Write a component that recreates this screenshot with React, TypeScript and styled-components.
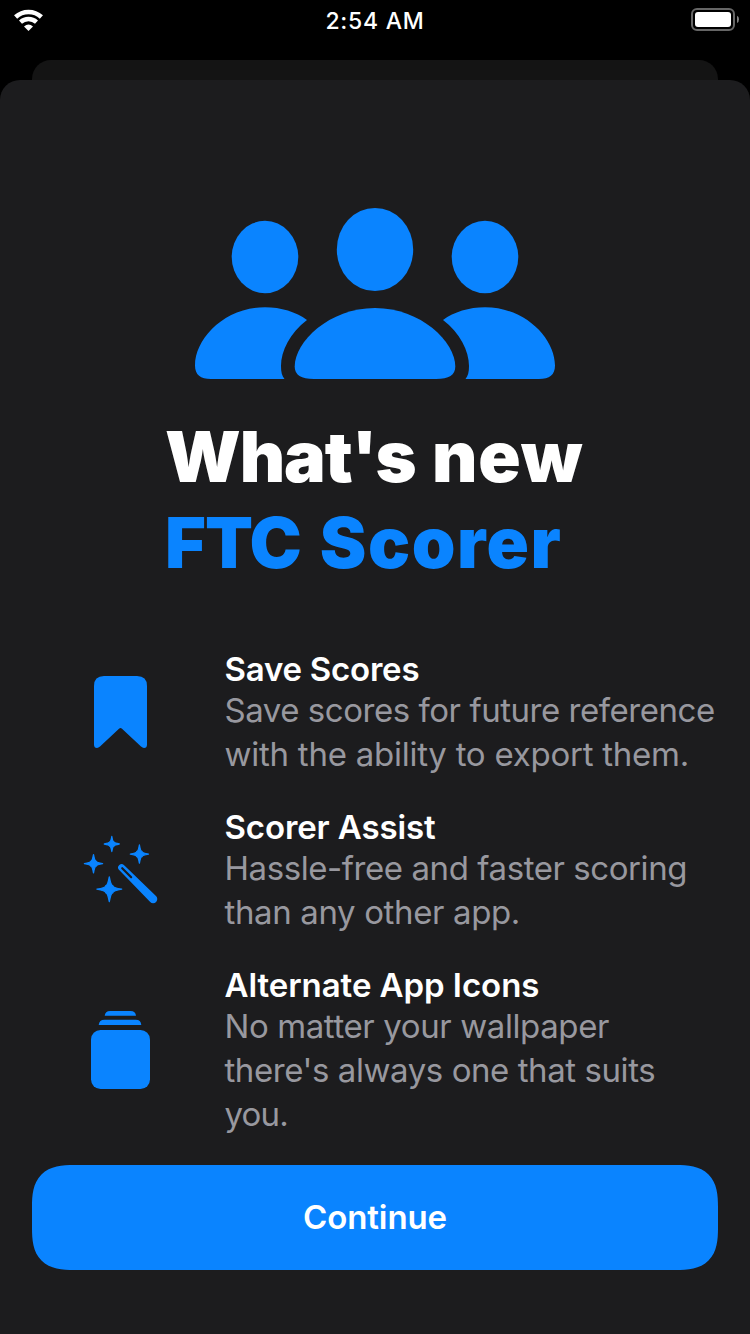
import React from "react";
import styled, { createGlobalStyle } from "styled-components";

const BLUE = "#0a84ff";

const GlobalStyle = createGlobalStyle`
  * { box-sizing: border-box; }
  body { margin: 0; background: #000; }
`;

const Screen = styled.div`
  width: 750px;
  height: 1334px;
  background: #000;
  overflow: hidden;
  display: flex;
  flex-direction: column;
  color: #fff;
  font-family: Inter, "Liberation Sans", sans-serif;
  font-feature-settings: "calt" 0;
`;

const StatusBar = styled.header`
  height: 60px;
  flex: none;
  display: grid;
  grid-template-columns: 1fr auto 1fr;
  align-items: start;
  padding: 8px 13px 0 13px;
`;

const Time = styled.span`
  font-size: 23px;
  line-height: 26px;
  font-weight: 500;
  letter-spacing: 0.75px;
  white-space: nowrap;
`;

const BatteryIcon = styled.svg`
  justify-self: end;
  display: block;
  margin-right: -2px;
`;

const BackCard = styled.div`
  height: 20px;
  flex: none;
  margin: 0 32px;
  background: #141414;
  border-radius: 19px 19px 0 0;
`;

const Sheet = styled.main`
  flex: 1;
  background: #1c1c1e;
  border-radius: 20px 20px 0 0;
  display: flex;
  flex-direction: column;
  align-items: center;
  padding: 120px 32px 64px;
`;

const Heading = styled.h1`
  margin: 29px 0 0;
  width: 420px;
  font-size: 70px;
  line-height: 86px;
  font-weight: 900;
`;

const HeadingLine = styled.span<{ $color: string; $gap: number }>`
  display: block;
  white-space: nowrap;
  color: ${(p) => p.$color};
  word-spacing: ${(p) => p.$gap}px;
`;

const HeadingWord = styled.span<{ $tracking: number }>`
  letter-spacing: ${(p) => p.$tracking}px;
`;

const Features = styled.ul`
  list-style: none;
  align-self: stretch;
  margin: 61px 0 0;
  padding: 0;
  display: flex;
  flex-direction: column;
  gap: 28px;
`;

const Feature = styled.li`
  display: grid;
  grid-template-columns: 177px 1fr;
  align-items: center;
  justify-items: center;
  margin-right: -32px;
`;

const FeatureIcon = styled.svg`
  display: block;
  fill: ${BLUE};
`;

const FeatureText = styled.div`
  justify-self: start;
  padding: 0 0 1px 15.5px;
`;

const FeatureTitle = styled.h2<{ $tracking: number }>`
  margin: 0 0 -3px;
  font-size: 33px;
  line-height: 44px;
  font-weight: 600;
  white-space: nowrap;
  letter-spacing: ${(p) => p.$tracking}px;
`;

const FeatureLine = styled.span<{ $tracking: number }>`
  display: block;
  font-size: 33px;
  line-height: 44px;
  color: #98989f;
  white-space: nowrap;
  letter-spacing: ${(p) => p.$tracking}px;
`;

const ContinueButton = styled.button`
  align-self: stretch;
  flex: none;
  height: 105px;
  margin-top: auto;
  padding: 0;
  border: 0;
  border-radius: 32px;
  background: ${BLUE};
  color: #fff;
  font: 600 33px/105px Inter, "Liberation Sans", sans-serif;
  letter-spacing: -0.1px;

  @supports (corner-shape: squircle) {
    border-radius: 42px;
    corner-shape: superellipse(1.44);
  }
`;

const Wifi = () => (
  <svg width="31" height="23" viewBox="13 8 31 23" fill="none" stroke="#fff">
    <path d="M15.6 17 A19 19 0 0 1 41.4 17" strokeWidth="4.6" />
    <path d="M20.5 22.2 A11.8 11.8 0 0 1 36.5 22.2" strokeWidth="4.4" />
    <path d="M24 26.4 Q28.5 22.5 33 26.4 L28.5 31 Z" fill="#fff" stroke="none" />
  </svg>
);

const Battery = () => (
  <BatteryIcon width="48" height="23" viewBox="691 8 48 23">
    <rect x="692" y="9" width="42" height="21" rx="5" fill="none" stroke="#666" strokeWidth="2" />
    <rect x="695" y="12" width="36" height="15" rx="3" fill="#fff" />
    <path d="M737 15.7 Q739 16.5 739 19.3 Q739 22.2 737 23 Z" fill="#808080" />
  </BatteryIcon>
);

const People = () => (
  <svg width="370" height="185" viewBox="190 200 370 185" fill={BLUE}>
    <ellipse cx="265" cy="257" rx="33.3" ry="36.2" />
    <ellipse cx="485" cy="257" rx="33.3" ry="36.2" />
    <ellipse cx="375" cy="249.5" rx="38.2" ry="41.6" />
    <path d="M314 379 C301 379 294.7 375 294.7 366.5 C294.7 342 329 308 375 308 C421 308 455.3 342 455.3 366.5 C455.3 375 449 379 436 379 Z" />
    <path d="M211 379 C200.5 379 195 375 195 365.5 C195 339 224 307.3 265 307.3 C281 307.3 296 312 307 320 C290 333 281 351 281 366 C281 372 282 376 284.5 379 Z" />
    <path d="M539 379 C549.5 379 555 375 555 365.5 C555 339 526 307.3 485 307.3 C469 307.3 454 312 443 320 C460 333 469 351 469 366 C469 372 468 376 465.5 379 Z" />
  </svg>
);

const Bookmark = () => (
  <FeatureIcon width="53" height="74" viewBox="94 675 53 74">
    <path d="M104 676 H137 Q147 676 147 686 V744.5 Q147 748 144 748 Q142.6 748 141 746.6 L122 728.7 Q120.5 727.4 119 728.7 L100 746.6 Q98.4 748 97 748 Q94 748 94 744.5 V686 Q94 676 104 676 Z" />
  </FeatureIcon>
);

const star = (x: number, y: number, r: number) => {
  const k = r * 0.22;
  return `M${x} ${y - r} Q${x + k * 0.6} ${y - k * 1.3} ${x + k * 1.3} ${y - k * 1.3} Q${x + k * 1.3} ${y - k * 0.6} ${x + r} ${y} Q${x + k * 1.3} ${y + k * 0.6} ${x + k * 1.3} ${y + k * 1.3} Q${x + k * 0.6} ${y + k * 1.3} ${x} ${y + r} Q${x - k * 0.6} ${y + k * 1.3} ${x - k * 1.3} ${y + k * 1.3} Q${x - k * 1.3} ${y + k * 0.6} ${x - r} ${y} Q${x - k * 1.3} ${y - k * 0.6} ${x - k * 1.3} ${y - k * 1.3} Q${x - k * 0.6} ${y - k * 1.3} ${x} ${y - r} Z`;
};

const Wand = () => (
  <FeatureIcon width="75" height="70" viewBox="83 835 75 70" strokeLinejoin="round" strokeLinecap="round">
    <g stroke={BLUE} strokeWidth="1.3">
      <path d={star(111.8, 844, 7.5)} />
      <path d={star(93.5, 863.7, 9.1)} />
      <path d={star(139.4, 854.1, 9.1)} />
      <path d={star(109.3, 889.2, 12.4)} />
    </g>
    <path stroke="none" d="M118.7 869.5 A3.5 3.5 0 0 1 123.9 864.9 L156 896 A4.1 4.1 0 0 1 150.2 902 Z" />
    <path d="M122.2 868.2 L131.2 877.2" stroke="#1c1c1e" strokeWidth="2.1" />
  </FeatureIcon>
);

const Stack = () => (
  <FeatureIcon width="59" height="80" viewBox="91 1010 59 80">
    <path d="M104.7 1015.8 Q105.2 1011 110 1011 H130.7 Q135.5 1011 136 1015.8 Z" />
    <path d="M98.7 1025 Q99.2 1019.7 104.5 1019.7 H135.7 Q141 1019.7 141.3 1025 Z" />
    <rect x="91" y="1030" width="59" height="59" rx="9.5" />
  </FeatureIcon>
);

type Line = [text: string, tracking: number];

const features: { icon: React.ReactNode; title: Line; lines: Line[] }[] = [
  {
    icon: <Bookmark />,
    title: ["Save Scores", -0.22],
    lines: [
      ["Save scores for future reference", -0.46],
      ["with the ability to export them.", -0.25],
    ],
  },
  {
    icon: <Wand />,
    title: ["Scorer Assist", -0.12],
    lines: [
      ["Hassle-free and faster scoring", -0.43],
      ["than any other app.", -0.37],
    ],
  },
  {
    icon: <Stack />,
    title: ["Alternate App Icons", -0.06],
    lines: [
      ["No matter your wallpaper", -0.4],
      ["there's always one that suits", -0.43],
      ["you.", -0.8],
    ],
  },
];

export default function App() {
  return (
    <Screen>
      <GlobalStyle />
      <StatusBar>
        <Wifi />
        <Time>2:54 AM</Time>
        <Battery />
      </StatusBar>
      <BackCard />
      <Sheet>
        <People />
        <Heading>
          <HeadingLine $color="#fff" $gap={2.5}>
            <HeadingWord $tracking={-1.1}>What's</HeadingWord>{" "}
            <HeadingWord $tracking={0.9}>new</HeadingWord>
          </HeadingLine>
          <HeadingLine $color={BLUE} $gap={5}>
            <HeadingWord $tracking={-1}>FTC</HeadingWord>{" "}
            <HeadingWord $tracking={1.5}>Scorer</HeadingWord>
          </HeadingLine>
        </Heading>
        <Features>
          {features.map(({ icon, title, lines }) => (
            <Feature key={title[0]}>
              {icon}
              <FeatureText>
                <FeatureTitle $tracking={title[1]}>{title[0]}</FeatureTitle>
                {lines.map(([text, tracking]) => (
                  <FeatureLine key={text} $tracking={tracking}>{text}</FeatureLine>
                ))}
              </FeatureText>
            </Feature>
          ))}
        </Features>
        <ContinueButton>Continue</ContinueButton>
      </Sheet>
    </Screen>
  );
}
